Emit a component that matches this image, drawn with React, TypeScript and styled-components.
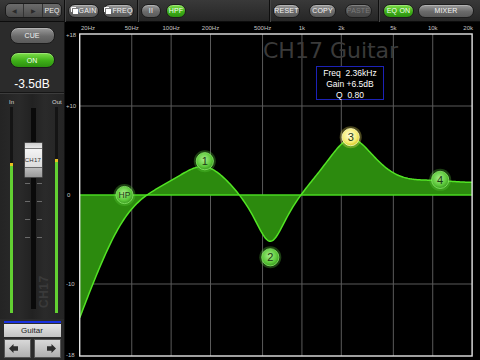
import React from 'react';
import styled, { createGlobalStyle, css } from 'styled-components';

const GlobalStyle = createGlobalStyle`
  html, body {
    margin: 0;
    padding: 0;
    background: #000;
  }
  body {
    font-family: 'Liberation Sans', Arial, sans-serif;
  }
`;

// graph mapping (page pixels)
const X0 = 80.7;
const XD = 130.8;
const Y0 = 195;
const YD = 8.9;
const X_END = X0 + 3 * XD;
const Y_TOP = 34;
const Y_BOT = 356;
const FS = 48000;

const fx = (f: number) => X0 + Math.log10(f / 20) * XD;
const gy = (db: number) => Y0 - db * YD;

type Coefs = [number, number, number, number, number, number];

const peaking = (f0: number, g: number, q: number): Coefs => {
  const A = Math.pow(10, g / 40);
  const w = (2 * Math.PI * f0) / FS;
  const al = Math.sin(w) / (2 * q);
  const c = Math.cos(w);
  return [1 + al * A, -2 * c, 1 - al * A, 1 + al / A, -2 * c, 1 - al / A];
};

const highShelf = (f0: number, g: number): Coefs => {
  const A = Math.pow(10, g / 40);
  const w = (2 * Math.PI * f0) / FS;
  const c = Math.cos(w);
  const al = (Math.sin(w) / 2) * Math.SQRT2;
  const s = 2 * Math.sqrt(A) * al;
  return [
    A * (A + 1 + (A - 1) * c + s),
    -2 * A * (A - 1 + (A + 1) * c),
    A * (A + 1 + (A - 1) * c - s),
    A + 1 - (A - 1) * c + s,
    2 * (A - 1 - (A + 1) * c),
    A + 1 - (A - 1) * c - s,
  ];
};

const highPass = (f0: number, q: number): Coefs => {
  const w = (2 * Math.PI * f0) / FS;
  const c = Math.cos(w);
  const al = Math.sin(w) / (2 * q);
  return [(1 + c) / 2, -(1 + c), (1 + c) / 2, 1 + al, -2 * c, 1 - al];
};

const magDb = (k: Coefs, f: number) => {
  const w = (2 * Math.PI * f) / FS;
  const c1 = Math.cos(w), s1 = Math.sin(w), c2 = Math.cos(2 * w), s2 = Math.sin(2 * w);
  const nr = k[0] + k[1] * c1 + k[2] * c2;
  const ni = -(k[1] * s1 + k[2] * s2);
  const dr = k[3] + k[4] * c1 + k[5] * c2;
  const di = -(k[4] * s1 + k[5] * s2);
  return 10 * Math.log10((nr * nr + ni * ni) / (dr * dr + di * di));
};

const bands = [
  { label: 'HP', f: 44, g: 0, k: highPass(44, 0.707) },
  { label: '1', f: 181, g: 3.8, k: peaking(181, 3.6, 0.75) },
  { label: '2', f: 573, g: -7, k: peaking(573, -6.5, 1.3) },
  { label: '3', f: 2360, g: 6.5, k: peaking(2360, 6.5, 0.8), selected: true },
  { label: '4', f: 11400, g: 1.7, k: highShelf(7000, 1.4) },
];

const buildCurve = () => {
  const pts: string[] = [];
  const n = 300;
  for (let i = 0; i <= n; i++) {
    const x = X0 + (i / n) * (X_END - X0);
    const f = 20 * Math.pow(10, (x - X0) / XD);
    const db = bands.reduce((s, b) => s + magDb(b.k, f), 0);
    const y = Math.min(Y_BOT, Math.max(Y_TOP, gy(db)));
    pts.push(`${x.toFixed(2)},${y.toFixed(2)}`);
  }
  return pts;
};

const freqLines = [50, 100, 200, 500, 1000, 2000, 5000, 10000];
const freqLabels: [string, number, 'start' | 'middle' | 'end'][] = [
  ['20Hz', 82, 'start'],
  ['50Hz', fx(50), 'middle'],
  ['100Hz', fx(100), 'middle'],
  ['200Hz', fx(200), 'middle'],
  ['500Hz', fx(500), 'middle'],
  ['1k', fx(1000), 'middle'],
  ['2k', fx(2000), 'middle'],
  ['5k', fx(5000), 'middle'],
  ['10k', fx(10000), 'middle'],
  ['20k', 474, 'end'],
];
const dbLabels: [string, number][] = [
  ['+18', 18],
  ['+10', 10],
  ['0', 0],
  ['-10', -10],
  ['-18', -18],
];

const Frame = styled.div`
  width: 480px;
  height: 360px;
  display: flex;
  flex-direction: column;
  overflow: hidden;
  background: #000;
`;

const Toolbar = styled.div`
  height: 22px;
  box-sizing: border-box;
  display: flex;
  align-items: center;
  background: linear-gradient(#393939, #262626);
  border-bottom: 1px solid #0c0c0c;
`;

const NavSection = styled.div`
  width: 62px;
  box-sizing: border-box;
  padding-left: 5px;
`;

const NavGroup = styled.div`
  width: 57px;
  height: 15px;
  box-sizing: border-box;
  display: flex;
  align-items: center;
  border-radius: 5px;
  border: 1px solid #1a1a1a;
  background: linear-gradient(#6c6c6c, #4a4a4a);
  overflow: hidden;
`;

const NavCell = styled.div<{ $w: number }>`
  width: ${(p) => p.$w}px;
  height: 100%;
  display: flex;
  align-items: center;
  justify-content: center;
  border-right: 1px solid #333;
  color: #2a2a2a;
  font-size: 6px;
`;

const NavText = styled.div`
  flex: 1;
  text-align: center;
  color: #eee;
  font-size: 7px;
`;

const Divider = styled.div`
  width: 1px;
  height: 22px;
  margin: 0 2px;
  background: #0e0e0e;
  box-shadow: 1px 0 0 #454545;
`;

const Group = styled.div<{ $gap: number; $pl?: number; $pr?: number }>`
  display: flex;
  align-items: center;
  gap: ${(p) => p.$gap}px;
  padding: 0 ${(p) => p.$pr ?? 1}px 0 ${(p) => p.$pl ?? 1}px;
`;

const Spacer = styled.div`
  flex: 1;
`;

const tones = {
  gray: css`
    background: linear-gradient(#9c9c9c, #6a6a6a 55%, #5a5a5a);
    color: #f2f2f2;
  `,
  green: css`
    background: linear-gradient(#7fe04a, #3fb018 55%, #2c9010);
    color: #f4fff0;
  `,
  off: css`
    background: linear-gradient(#5a5a5a, #444);
    color: #7a7a7a;
  `,
};

type Tone = keyof typeof tones;

const ToolButton = styled.div<{ $w: number; $tone?: Tone }>`
  width: ${(p) => p.$w}px;
  height: 14px;
  box-sizing: border-box;
  display: flex;
  align-items: center;
  justify-content: center;
  gap: 1px;
  border-radius: 7px;
  border: 1px solid #1c1c1c;
  font-size: 7px;
  letter-spacing: 0.2px;
  box-shadow: inset 0 1px 0 rgba(255, 255, 255, 0.25);
  ${(p) => tones[p.$tone ?? 'gray']}
`;

const Body = styled.div`
  flex: 1;
  display: flex;
  min-height: 0;
`;

const LeftPanel = styled.div`
  width: 65px;
  box-sizing: border-box;
  border-right: 1px solid #111;
  background: #2b2b2b;
  display: flex;
  flex-direction: column;
  align-items: center;
  padding-top: 5px;
`;

const PillButton = styled.div<{ $tone?: Tone; $h: number; $mt?: number }>`
  width: 45px;
  height: ${(p) => p.$h}px;
  margin-top: ${(p) => p.$mt ?? 0}px;
  box-sizing: border-box;
  border-radius: 8px;
  border: 1px solid #1c1c1c;
  display: flex;
  align-items: center;
  justify-content: center;
  font-size: 7px;
  box-shadow: inset 0 1px 0 rgba(255, 255, 255, 0.25);
  ${(p) => tones[p.$tone ?? 'gray']}
`;

const Level = styled.div`
  margin-top: 9px;
  height: 14px;
  line-height: 14px;
  color: #fff;
  font-size: 12px;
`;

const HRule = styled.div`
  margin-top: 1px;
  width: 100%;
  height: 1px;
  background: #151515;
  box-shadow: 0 1px 0 #3c3c3c;
`;

const MeterSection = styled.div`
  position: relative;
  flex: 1;
  width: 100%;
  box-sizing: border-box;
  margin-top: 1px;
  padding: 4px 0 6px;
  display: grid;
  grid-template-columns: 18px 30px 17px;
  background: linear-gradient(90deg, #242424, #2a2a2a 30%, #222 50%, #2a2a2a 70%, #242424);
`;

const MeterCol = styled.div<{ $pl: number; $barOffset: number }>`
  display: flex;
  flex-direction: column;
  padding-left: ${(p) => p.$pl}px;
  --bar-offset: ${(p) => p.$barOffset}px;
`;

const MeterLabel = styled.div`
  height: 9px;
  line-height: 8px;
  font-size: 6px;
  color: #d8d8d8;
`;

const MeterTrack = styled.div`
  flex: 1;
  width: 3px;
  margin-left: var(--bar-offset);
  background: #141414;
  display: flex;
  flex-direction: column;
  justify-content: flex-end;
`;

const MeterFill = styled.div`
  background: linear-gradient(#e8c020 0 3px, #62d032 3px);
`;

const FaderCol = styled.div`
  display: flex;
  flex-direction: column;
  align-items: center;
  padding: 10px 0 4px;
`;

const FaderSlot = styled.div`
  position: relative;
  flex: 1;
  width: 19px;
  display: flex;
  flex-direction: column;
  gap: 17px;
  padding-top: 75px;
  box-sizing: border-box;
  background: linear-gradient(90deg, transparent 7px, #0a0a0a 7px, #0a0a0a 12px, transparent 12px);
`;

const Tick = styled.div`
  height: 1px;
  background: linear-gradient(90deg, transparent 1px, #6a6a6a 1px 6px, transparent 6px 13px, #6a6a6a 13px 18px, transparent 18px);
`;

const Knob = styled.div`
  position: absolute;
  left: 0;
  width: 19px;
  height: 36px;
  box-sizing: border-box;
  border: 1px solid #4a4a4a;
  border-radius: 1px;
  background: linear-gradient(
    #cfcfcf 0,
    #e8e8e8 5px,
    #7a7a7a 5px,
    #7a7a7a 6px,
    #f4f4f4 6px,
    #dcdcdc 24px,
    #6a6a6a 24px,
    #6a6a6a 25px,
    #bdbdbd 25px,
    #9a9a9a 100%
  );
  display: flex;
  align-items: center;
  justify-content: center;
  font-size: 6px;
  color: #333;
  letter-spacing: 0.3px;
`;

const Watermark = styled.div`
  position: absolute;
  left: 38px;
  top: 214px;
  transform: rotate(-90deg);
  transform-origin: left top;
  font-size: 12px;
  font-weight: bold;
  color: #3a3a3a;
  letter-spacing: 0.5px;
  white-space: nowrap;
  line-height: 12px;
`;

const ChannelFoot = styled.div`
  width: 57px;
  display: flex;
  flex-direction: column;
  padding-bottom: 2px;
`;

const BlueLine = styled.div`
  height: 2px;
  margin-top: 2px;
  background: #1830e0;
`;

const NameTag = styled.div`
  height: 13px;
  margin-top: 1px;
  background: linear-gradient(#e6e6e6, #c4c4c4);
  color: #222;
  font-size: 8px;
  line-height: 13px;
  text-align: center;
`;

const ArrowRow = styled.div`
  display: flex;
  gap: 3px;
  margin-top: 2px;
`;

const ArrowButton = styled.div<{ $side: 'left' | 'right' }>`
  width: 27px;
  height: 19px;
  box-sizing: border-box;
  display: flex;
  align-items: center;
  justify-content: ${(p) => (p.$side === 'left' ? 'flex-start' : 'flex-end')};
  padding: 0 4px;
  background: linear-gradient(#d8d8d8, #b0b0b0);
  border: 1px solid #555;
`;

const GraphArea = styled.div`
  position: relative;
  flex: 1;
  background: #000;
`;

const Title = styled.div`
  position: absolute;
  left: 198px;
  top: 18px;
  font-family: 'DejaVu Sans', sans-serif;
  font-size: 22px;
  line-height: 22px;
  color: #3a3a3a;
  white-space: nowrap;
`;

const InfoBox = styled.div`
  position: absolute;
  left: 251px;
  top: 44px;
  width: 68px;
  height: 34px;
  box-sizing: border-box;
  border: 1px solid #1c22b8;
  background: #000;
  color: #fff;
  font-size: 8.5px;
  line-height: 11px;
  text-align: center;
  white-space: pre;
  padding-top: 1px;
`;

const GainIcon = () => (
  <svg width="7" height="7" viewBox="0 0 7 7">
    <path d="M0.5 5V0.5H5" stroke="#fff" strokeWidth="1" fill="none" />
    <rect x="2" y="2" width="5" height="5" fill="#fff" />
  </svg>
);

const Arrow = ({ dir }: { dir: 'left' | 'right' }) => (
  <svg width="9" height="9" viewBox="0 0 10 10">
    <path
      d="M0 5L5 0V2.5H10V7.5H5V10Z"
      fill="#2c2c2c"
      transform={dir === 'right' ? 'rotate(180 5 5)' : undefined}
    />
  </svg>
);

const Graph = () => {
  const pts = buildCurve();
  const fill = `M${X0},${Y0} L${pts.join(' L')} L${X_END},${Y0} Z`;
  return (
    <svg width="414" height="338" viewBox="66 22 414 338" style={{ display: 'block' }}>
      <defs>
        <radialGradient id="ng" cx="45%" cy="40%" r="60%">
          <stop offset="0%" stopColor="#a6ee8a" />
          <stop offset="70%" stopColor="#5cc83a" />
          <stop offset="100%" stopColor="#3a9a20" />
        </radialGradient>
        <radialGradient id="ny" cx="45%" cy="40%" r="60%">
          <stop offset="0%" stopColor="#fffde0" />
          <stop offset="70%" stopColor="#f4ec70" />
          <stop offset="100%" stopColor="#d4c820" />
        </radialGradient>
      </defs>
      {freqLines.map((f) => (
        <line key={f} x1={fx(f)} x2={fx(f)} y1={Y_TOP} y2={Y_BOT} stroke="#5a5a5a" strokeWidth="1" />
      ))}
      {[10, -10].map((d) => (
        <line key={d} x1={X0} x2={X_END} y1={gy(d)} y2={gy(d)} stroke="#5a5a5a" strokeWidth="1" />
      ))}
      <path d={fill} fill="#2c8a0e" />
      <line x1={X0} x2={X_END} y1={Y0} y2={Y0} stroke="#48d820" strokeWidth="1.6" />
      <polyline points={pts.join(' ')} fill="none" stroke="#52e424" strokeWidth="1.5" />
      <rect x={X0} y={Y_TOP} width={X_END - X0} height={Y_BOT - Y_TOP} fill="none" stroke="#e4e4e4" strokeWidth="1.4" />
      <g fontFamily="'Liberation Sans', Arial, sans-serif" fontSize="6" fill="#c4c4c4">
        {freqLabels.map(([t, x, a]) => (
          <text key={t} x={x} y={30} textAnchor={a}>
            {t}
          </text>
        ))}
        {dbLabels.map(([t, d]) => (
          <text key={t} x={t === '0' ? 68 : 67} y={gy(d) + 2}>
            {t}
          </text>
        ))}
      </g>
      {bands.map((b) => {
        const x = fx(b.f);
        const y = gy(b.g);
        const sel = !!b.selected;
        return (
          <g key={b.label}>
            <circle cx={x} cy={y} r="11" fill={sel ? '#f4ec60' : '#5cd23a'} opacity="0.3" />
            <circle cx={x} cy={y} r="8.6" fill={sel ? 'url(#ny)' : 'url(#ng)'} stroke={sel ? '#fffbc0' : '#8ae86a'} strokeWidth="0.8" />
            <text
              x={x}
              y={y + (b.label === 'HP' ? 3 : 4)}
              textAnchor="middle"
              fontFamily="'Liberation Sans', Arial, sans-serif"
              fontSize={b.label === 'HP' ? 8.5 : 11}
              fill="#1e3a14"
            >
              {b.label}
            </text>
          </g>
        );
      })}
    </svg>
  );
};

export default function App() {
  return (
    <Frame>
      <GlobalStyle />
      <Toolbar>
        <NavSection>
          <NavGroup>
            <NavCell $w={17}>◀</NavCell>
            <NavCell $w={18}>▶</NavCell>
            <NavText>PEQ</NavText>
          </NavGroup>
        </NavSection>
        <Divider />
        <Group $gap={4}>
          <ToolButton $w={31}>
            <GainIcon />
            GAIN
          </ToolButton>
          <ToolButton $w={31}>
            <GainIcon />
            FREQ
          </ToolButton>
        </Group>
        <Divider />
        <Group $gap={5}>
          <ToolButton $w={20}>II</ToolButton>
          <ToolButton $w={20} $tone="green">
            HPF
          </ToolButton>
        </Group>
        <Spacer />
        <Divider />
        <Group $gap={9} $pr={4}>
          <ToolButton $w={27}>RESET</ToolButton>
          <ToolButton $w={27}>COPY</ToolButton>
          <ToolButton $w={27} $tone="off">
            PASTE
          </ToolButton>
        </Group>
        <Divider />
        <Group $gap={4} $pl={2} $pr={6}>
          <ToolButton $w={31} $tone="green">
            EQ ON
          </ToolButton>
          <ToolButton $w={56}>MIXER</ToolButton>
        </Group>
      </Toolbar>
      <Body>
        <LeftPanel>
          <PillButton $h={17}>CUE</PillButton>
          <PillButton $h={16} $mt={8} $tone="green">
            ON
          </PillButton>
          <Level>-3.5dB</Level>
          <HRule />
          <MeterSection>
            <MeterCol $pl={9} $barOffset={1}>
              <MeterLabel>In</MeterLabel>
              <MeterTrack>
                <MeterFill style={{ height: '73%' }} />
              </MeterTrack>
            </MeterCol>
            <FaderCol>
              <FaderSlot>
                <Tick />
                <Tick />
                <Tick />
                <Tick />
                <Knob style={{ top: 34 }}>CH17</Knob>
              </FaderSlot>
            </FaderCol>
            <MeterCol $pl={4} $barOffset={3}>
              <MeterLabel>Out</MeterLabel>
              <MeterTrack>
                <MeterFill style={{ height: '75%' }} />
              </MeterTrack>
            </MeterCol>
            <Watermark>CH17</Watermark>
          </MeterSection>
          <ChannelFoot>
            <BlueLine />
            <NameTag>Guitar</NameTag>
            <ArrowRow>
              <ArrowButton $side="left">
                <Arrow dir="left" />
              </ArrowButton>
              <ArrowButton $side="right">
                <Arrow dir="right" />
              </ArrowButton>
            </ArrowRow>
          </ChannelFoot>
        </LeftPanel>
        <GraphArea>
          <Graph />
          <Title>CH17 Guitar</Title>
          <InfoBox>{'Freq  2.36kHz\nGain +6.5dB\nQ  0.80'}</InfoBox>
        </GraphArea>
      </Body>
    </Frame>
  );
}
